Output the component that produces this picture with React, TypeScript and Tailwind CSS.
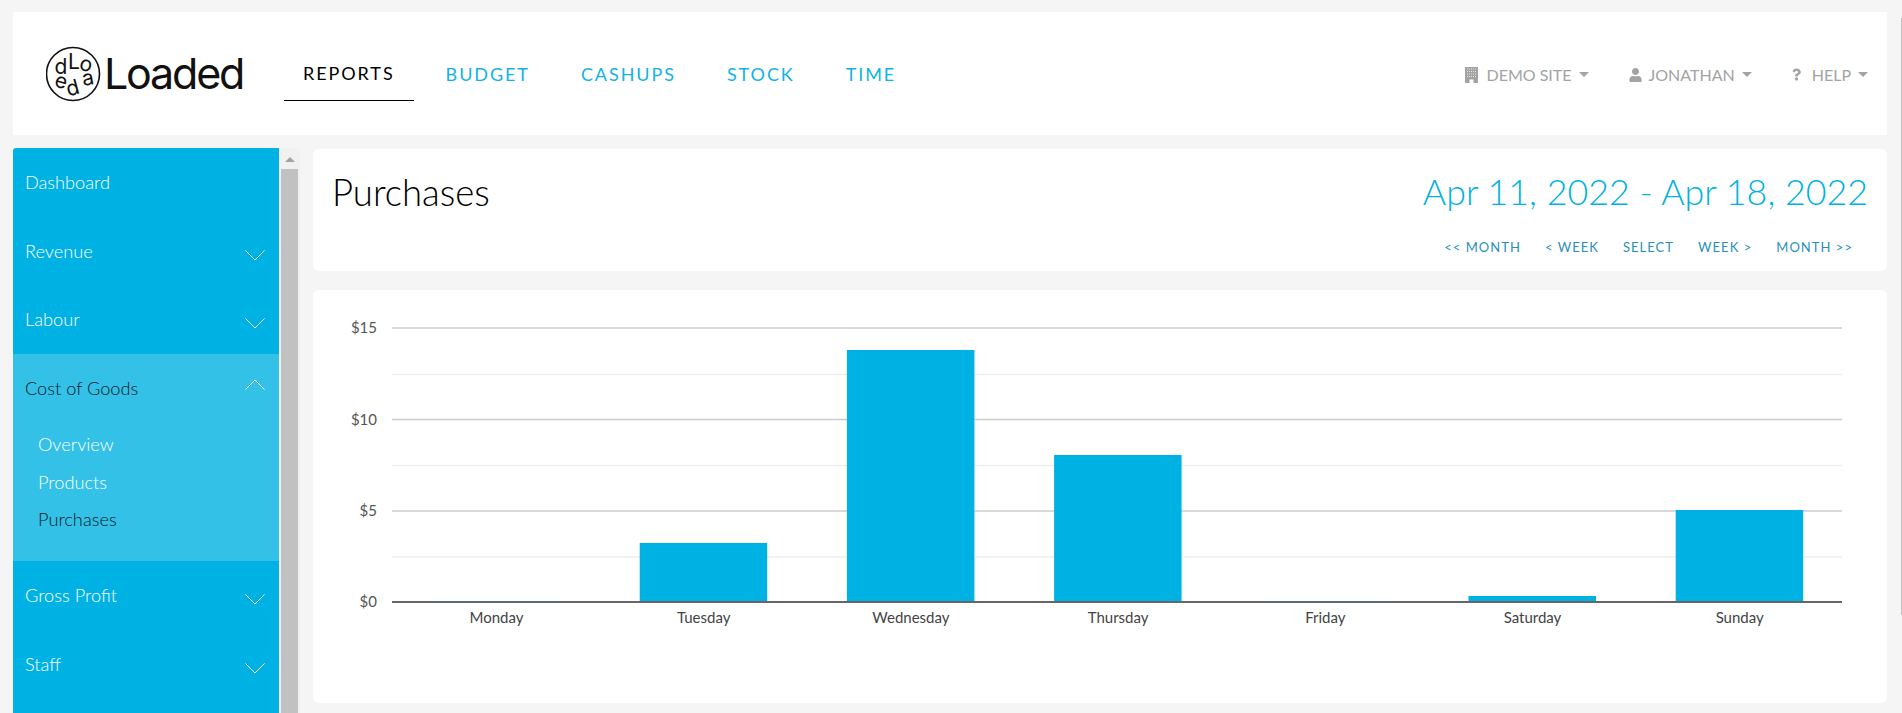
import { FaUser, FaQuestion } from "react-icons/fa";

const topLinks = ["BUDGET", "CASHUPS", "STOCK", "TIME"];
const dateLinks = ["<< MONTH", "< WEEK", "SELECT", "WEEK >", "MONTH >>"];

const days = [
  { name: "Monday", top: 311, line: true },
  { name: "Tuesday", top: 253 },
  { name: "Wednesday", top: 60 },
  { name: "Thursday", top: 165 },
  { name: "Friday", top: 311, line: true },
  { name: "Saturday", top: 306 },
  { name: "Sunday", top: 220 },
];

function Logo() {
  return (
    <svg width="212" height="62" viewBox="0 0 212 62" className="shrink-0">
      <circle cx="27" cy="31" r="26.5" fill="none" stroke="#111" strokeWidth="1.6" />
      <g fontFamily="Inter, sans-serif" fontSize="21" fill="#111" textAnchor="middle">
        <text x="15" y="31">d</text>
        <text x="28" y="26">L</text>
        <text x="40" y="28" transform="rotate(15 40 22)">o</text>
        <text x="42" y="42" transform="rotate(-10 42 36)">a</text>
        <text x="27" y="52" transform="rotate(-15 27 46)">d</text>
        <text x="15" y="45" transform="rotate(15 15 39)">e</text>
      </g>
      <text x="58" y="46" fontFamily="Inter, sans-serif" fontSize="43" fontWeight="400" letterSpacing="-2.2" fill="#111">
        Loaded
      </text>
    </svg>
  );
}

function Building() {
  return (
    <svg width="13" height="16" viewBox="0 0 13 16" className="shrink-0">
      <rect width="13" height="16" fill="#a3a3a3" />
      <path d="M2 2h9M2 4.500h9M2 7h9M2 9.500h9" stroke="#e4e4e4" strokeWidth="1" strokeDasharray="1 1" />
      <rect x="4.500" y="12.500" width="4" height="3.500" fill="#fff" />
    </svg>
  );
}

function Caret() {
  return <span className="ml-[7px] w-0 h-0 border-x-[5px] border-x-transparent border-t-[5px] border-t-[#a3a3a3]" />;
}

function Chevron({ up }: { up?: boolean }) {
  return (
    <svg width="20" height="11" viewBox="0 0 20 11" className="shrink-0" fill="none" stroke="#fff" strokeWidth="1">
      <path d={up ? "M0.500 10.500L10 1l9.500 9.500" : "M0.500 0.500L10 10l9.500-9.500"} />
    </svg>
  );
}

function SideItem({ label, chevron }: { label: string; chevron?: boolean }) {
  return (
    <div className="h-[68.7px] pl-[12px] pr-[14px] flex items-center justify-between text-white">
      <span className="-mt-px">{label}</span>
      {chevron && (
        <span className="mt-2">
          <Chevron />
        </span>
      )}
    </div>
  );
}

function Sidebar() {
  return (
    <div className="w-[287px] flex shrink-0 h-[565px] overflow-hidden">
      <nav className="w-[266px] bg-[#00b2e3] rounded-tl-[3px] font-light text-[18.200px] leading-6">
        <SideItem label="Dashboard" />
        <SideItem label="Revenue" chevron />
        <SideItem label="Labour" chevron />
        <div className="h-[207px] bg-[#33c1e8]">
          <div className="h-[69px] pl-[12px] pr-[14px] flex items-center justify-between text-[#0c1a1f]">
            <span className="-mt-px">Cost of Goods</span>
            <span className="-mt-2">
              <Chevron up />
            </span>
          </div>
          <ul className="pl-[25px] pt-[3px] leading-[37.500px]">
            <li className="text-white">Overview</li>
            <li className="text-white">Products</li>
            <li className="text-[#0c1a1f]">Purchases</li>
          </ul>
        </div>
        <SideItem label="Gross Profit" chevron />
        <SideItem label="Staff" chevron />
      </nav>
      <div className="w-[21px] bg-[#f1f1f1] pl-[2px] pr-[2px] flex flex-col items-center">
        <span className="mt-[9px] mb-[7px] w-0 h-0 border-x-[5px] border-x-transparent border-b-[5px] border-b-[#a3a3a3]" />
        <div className="w-[17px] flex-1 bg-[#c1c1c1]" />
      </div>
    </div>
  );
}

function Chart() {
  return (
    <svg width="1574" height="413" viewBox="0 0 1574 413" className="block" fontFamily="Lato, sans-serif">
      {[84.5, 175.5, 267].map((y) => (
        <line key={y} x1="79" x2="1529" y1={y} y2={y} stroke="#eeeeee" strokeWidth="1.500" />
      ))}
      {[38, 129.5, 221].map((y) => (
        <line key={y} x1="79" x2="1529" y1={y} y2={y} stroke="#cccccc" strokeWidth="1.500" />
      ))}
      {days.map((d, i) => {
        const x = 119.5 + i * 207.2;
        return d.line ? null : <rect key={d.name} x={x} y={d.top} width="127.500" height={312 - d.top} fill="#00b2e3" />;
      })}
      <line x1="79" x2="1529" y1="312" y2="312" stroke="#666666" strokeWidth="2" />
      {days.map((d, i) => {
        const x = 119.5 + i * 207.2;
        return d.line ? <line key={d.name} x1={x} x2={x + 128} y1="311.500" y2="311.500" stroke="#4a7585" strokeWidth="1" /> : null;
      })}
      {[["$15", 38], ["$10", 129.5], ["$5", 221], ["$0", 312]].map(([t, y]) => (
        <text key={t} x="64" y={Number(y) + 5} textAnchor="end" fontSize="15" fill="#555555">
          {t}
        </text>
      ))}
      {days.map((d, i) => (
        <text key={d.name} x={183.5 + i * 207.2} y="327" dy="6" textAnchor="middle" fontSize="15" fill="#444444">
          {d.name}
        </text>
      ))}
    </svg>
  );
}

export default function App() {
  return (
    <div className="h-[713px] w-full overflow-hidden bg-[#f5f5f5] flex font-['Lato',sans-serif]">
      <div className="flex-1 min-w-0 pl-[13px] pr-[14px] pt-[12px]">
        <header className="h-[123px] bg-white flex items-center pl-[33px] pr-[19px]">
          <Logo />
          <div className="flex items-center ml-[26px] text-[18px] tracking-[0.107em] font-normal">
            <a className="h-[56px] px-[19px] pt-[2px] mt-[-1px] flex items-center border-b border-black text-black">REPORTS</a>
            {topLinks.map((l) => (
              <a key={l} className="ml-[13px] h-[56px] px-[19px] pt-[2px] flex items-center text-[#12b3e3]">
                {l}
              </a>
            ))}
          </div>
          <div className="ml-auto pt-[2px] flex items-center gap-[40px] text-[16px] text-[#a3a3a3] font-normal">
            <span className="flex items-center">
              <Building />
              <span className="ml-[9px]">DEMO SITE</span>
              <Caret />
            </span>
            <span className="flex items-center">
              <FaUser className="w-[13px] h-[14px]" />
              <span className="ml-[7px]">JONATHAN</span>
              <Caret />
            </span>
            <span className="flex items-center">
              <FaQuestion className="w-[9px] h-[13px]" />
              <span className="ml-[11px]">HELP</span>
              <Caret />
            </span>
          </div>
        </header>
        <div className="flex mt-[13px]">
          <Sidebar />
          <main className="flex-1 min-w-0 ml-[13px] mt-[1px]">
            <section className="h-[122px] bg-white rounded-[6px] pl-[19px] pr-[19px] pt-[20px]">
              <div className="flex justify-between items-center">
                <h1 className="font-light text-[36.500px] leading-[46px] text-black">Purchases</h1>
                <div className="font-light text-[35.800px] leading-[46px] text-[#00b2e3]">Apr 11, 2022 - Apr 18, 2022</div>
              </div>
              <div className="flex justify-end gap-[24px] mt-[24px] pr-[15px] text-[13px] leading-4 tracking-[0.08em] font-normal text-[#2a8fb8]">
                {dateLinks.map((l) => (
                  <a key={l}>{l}</a>
                ))}
              </div>
            </section>
            <section className="mt-[19px] h-[413px] bg-white rounded-[6px] overflow-hidden">
              <Chart />
            </section>
          </main>
        </div>
      </div>
      <div className="w-px h-[597px] mt-[18px] bg-[#c1c1c1] shrink-0" />
    </div>
  );
}
